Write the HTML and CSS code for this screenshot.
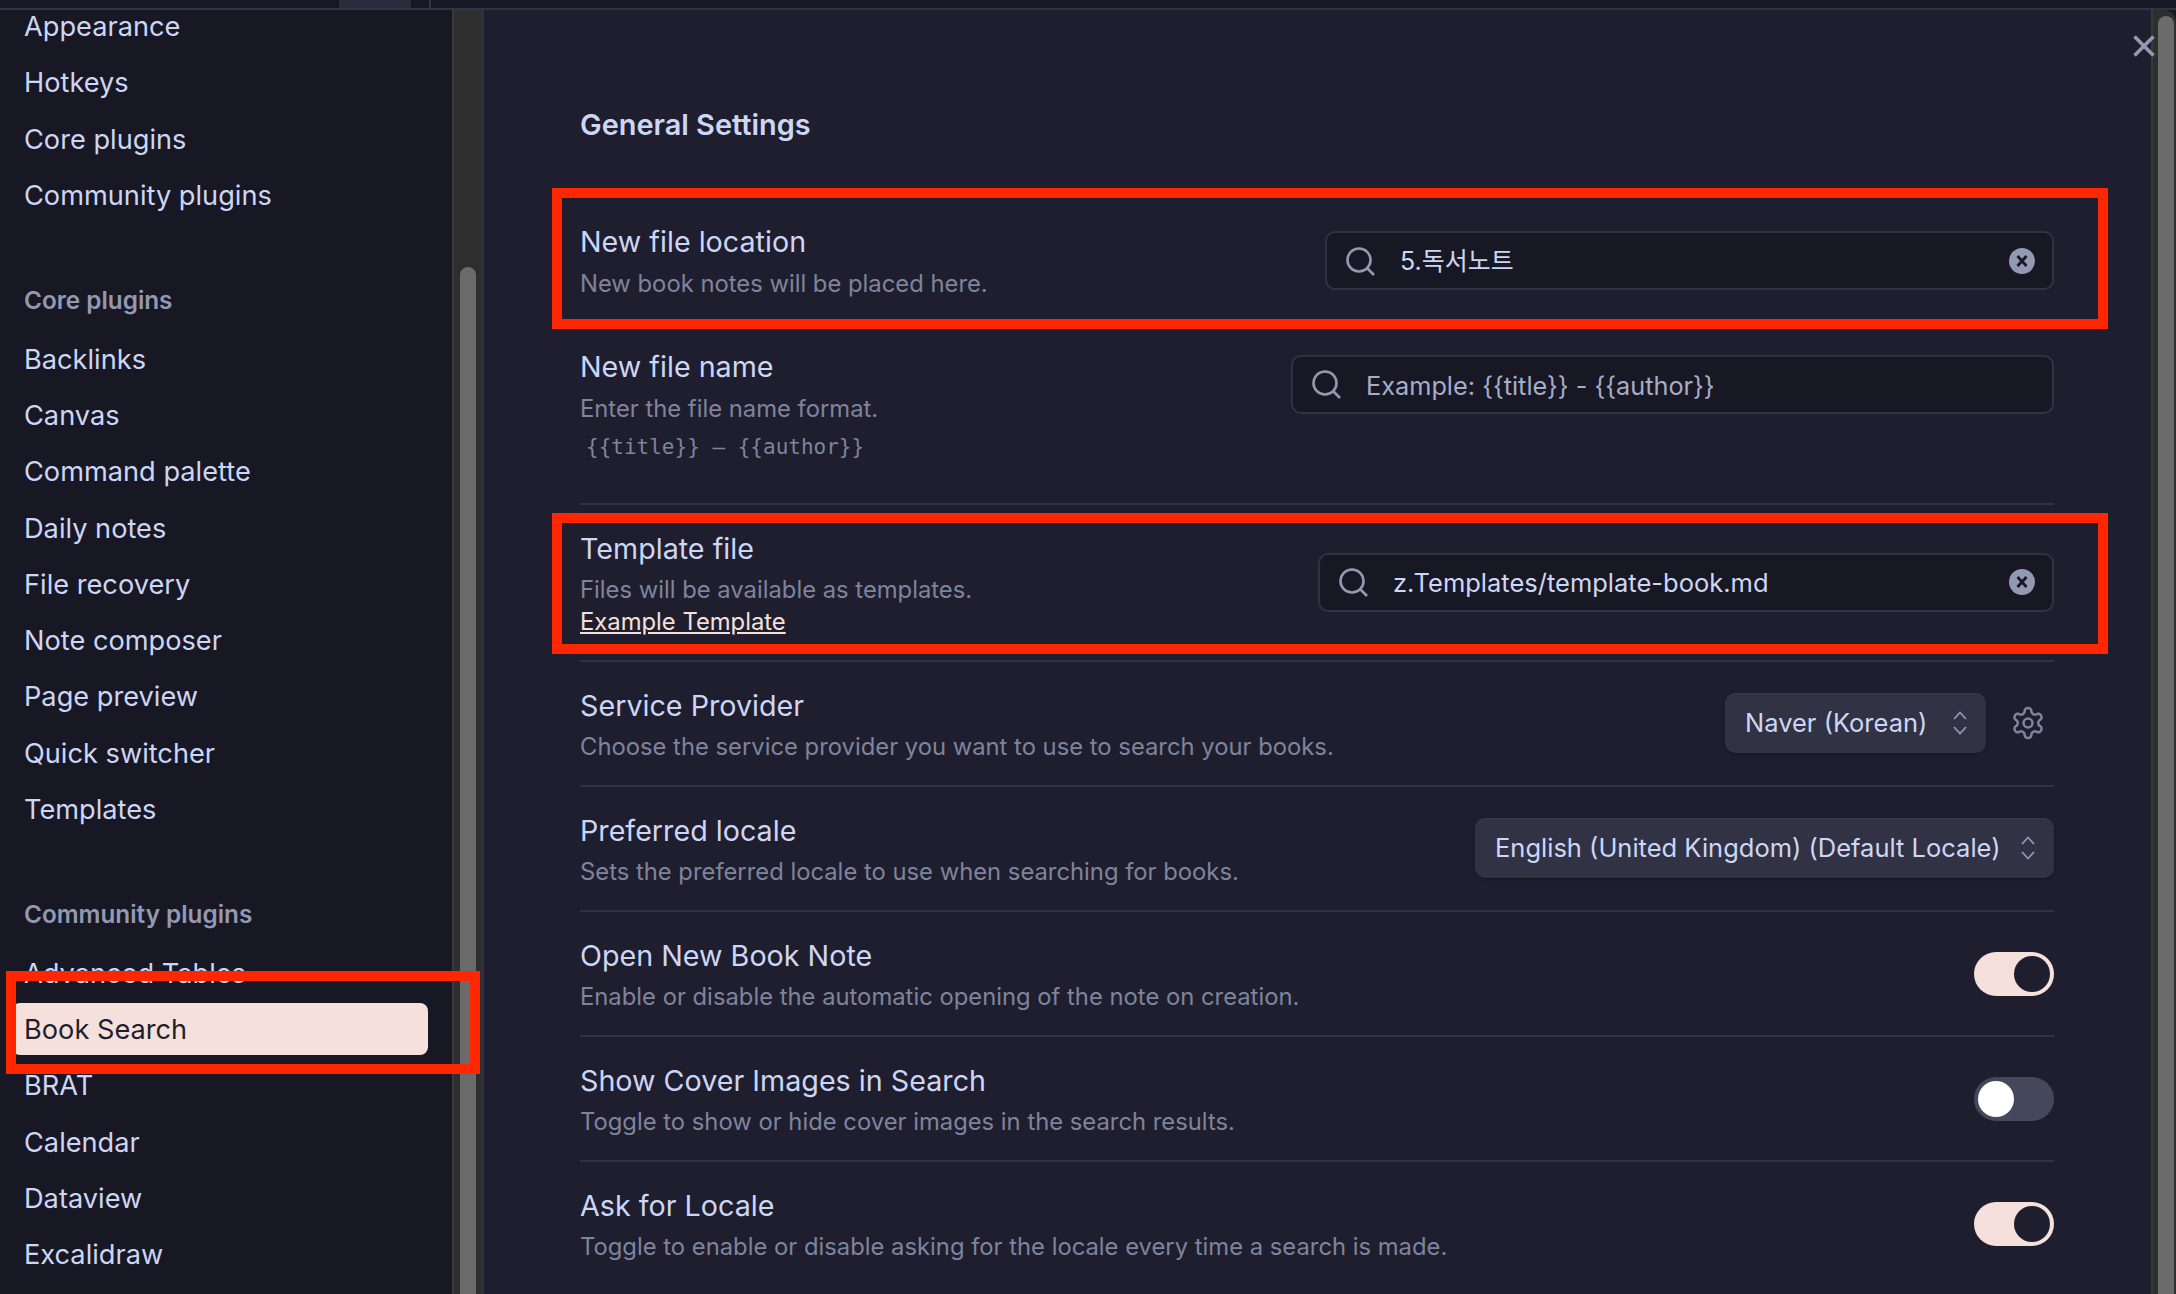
FILE: index.html
```html
<!DOCTYPE html>
<html lang="en">
<head>
    <meta charset="UTF-8">
    <title>Settings - Book Search</title>
    <link rel="stylesheet" href="styles.css">
</head>
<body>

<svg class="icon-defs" width="0" height="0">
    <symbol id="search" viewBox="0 0 30 30"><circle cx="14" cy="14" r="11.5"/><path d="M22.5 22.5 L29 29"/></symbol>
    <symbol id="clear" viewBox="0 0 26 26"><circle class="clear-disc" cx="13" cy="13" r="13"/><path class="clear-x" d="M8.5 8 L17.5 18 M17.5 8 L8.5 18"/></symbol>
    <symbol id="updown" viewBox="0 0 16 26"><path d="M2 9 L8 2.5 L14 9 M2 17 L8 23.5 L14 17"/></symbol>
</svg>

<!-- Tab strip -->
<div class="topbar">
    <div class="topbar-tab"></div>
    <div class="topbar-sep"></div>
</div>

<div class="modal">
    <!-- Sidebar -->
    <nav class="sidebar">
        <div class="nav-group nav-group-first">
            <div class="nav-item">Appearance</div>
            <div class="nav-item">Hotkeys</div>
            <div class="nav-item">Core plugins</div>
            <div class="nav-item">Community plugins</div>
        </div>
        <div class="nav-group">
            <div class="nav-title">Core plugins</div>
            <div class="nav-item">Backlinks</div>
            <div class="nav-item">Canvas</div>
            <div class="nav-item">Command palette</div>
            <div class="nav-item">Daily notes</div>
            <div class="nav-item">File recovery</div>
            <div class="nav-item">Note composer</div>
            <div class="nav-item">Page preview</div>
            <div class="nav-item">Quick switcher</div>
            <div class="nav-item">Templates</div>
        </div>
        <div class="nav-group">
            <div class="nav-title">Community plugins</div>
            <div class="nav-item">Advanced Tables</div>
            <div class="nav-item active">Book Search</div>
            <div class="nav-item">BRAT</div>
            <div class="nav-item">Calendar</div>
            <div class="nav-item">Dataview</div>
            <div class="nav-item">Excalidraw</div>
        </div>
    </nav>
    <div class="scrollbar scrollbar-nav"><div class="thumb thumb-nav"></div></div>

    <!-- Settings -->
    <main class="content">
        <h2 class="section-title">General Settings</h2>

        <div class="row row-first">
            <div class="info">
                <div class="name">New file location</div>
                <div class="desc">New book notes will be placed here.</div>
            </div>
            <div class="search-box box-location">
                <svg class="search-icon"><use href="#search"/></svg>
                <span class="search-value search-cjk">5.독서노트</span>
                <svg class="clear-icon"><use href="#clear"/></svg>
            </div>
        </div>

        <div class="row row-name">
            <div class="info">
                <div class="name">New file name</div>
                <div class="desc">Enter the file name format.</div>
                <code class="format">{{title}} – {{author}}</code>
            </div>
            <div class="search-box box-name">
                <svg class="search-icon"><use href="#search"/></svg>
                <span class="search-placeholder">Example: {{title}} - {{author}}</span>
            </div>
        </div>

        <div class="row row-template">
            <div class="info">
                <div class="name">Template file</div>
                <div class="desc">Files will be available as templates.</div>
                <a class="link" href="#">Example Template</a>
            </div>
            <div class="search-box box-template">
                <svg class="search-icon"><use href="#search"/></svg>
                <span class="search-value">z.Templates/template-book.md</span>
                <svg class="clear-icon"><use href="#clear"/></svg>
            </div>
        </div>

        <div class="row">
            <div class="info">
                <div class="name">Service Provider</div>
                <div class="desc">Choose the service provider you want to use to search your books.</div>
            </div>
            <div class="select select-provider">
                <span>Naver (Korean)</span>
                <svg class="updown"><use href="#updown"/></svg>
            </div>
            <svg class="gear" viewBox="0 0 24 24"><path d="M12.22 2h-.44a2 2 0 0 0-2 2v.18a2 2 0 0 1-1 1.73l-.43.25a2 2 0 0 1-2 0l-.15-.08a2 2 0 0 0-2.73.73l-.22.38a2 2 0 0 0 .73 2.73l.15.1a2 2 0 0 1 1 1.72v.51a2 2 0 0 1-1 1.74l-.15.09a2 2 0 0 0-.73 2.73l.22.38a2 2 0 0 0 2.73.73l.15-.08a2 2 0 0 1 2 0l.43.25a2 2 0 0 1 1 1.73V20a2 2 0 0 0 2 2h.44a2 2 0 0 0 2-2v-.18a2 2 0 0 1 1-1.73l.43-.25a2 2 0 0 1 2 0l.15.08a2 2 0 0 0 2.73-.73l.22-.39a2 2 0 0 0-.73-2.73l-.15-.08a2 2 0 0 1-1-1.74v-.5a2 2 0 0 1 1-1.74l.15-.09a2 2 0 0 0 .73-2.73l-.22-.38a2 2 0 0 0-2.73-.73l-.15.08a2 2 0 0 1-2 0l-.43-.25a2 2 0 0 1-1-1.73V4a2 2 0 0 0-2-2z"/><circle cx="12" cy="12" r="3"/></svg>
        </div>

        <div class="row">
            <div class="info">
                <div class="name">Preferred locale</div>
                <div class="desc">Sets the preferred locale to use when searching for books.</div>
            </div>
            <div class="select select-locale">
                <span>English (United Kingdom) (Default Locale)</span>
                <svg class="updown"><use href="#updown"/></svg>
            </div>
        </div>

        <div class="row">
            <div class="info">
                <div class="name">Open New Book Note</div>
                <div class="desc">Enable or disable the automatic opening of the note on creation.</div>
            </div>
            <div class="toggle on"><div class="knob"></div></div>
        </div>

        <div class="row">
            <div class="info">
                <div class="name">Show Cover Images in Search</div>
                <div class="desc">Toggle to show or hide cover images in the search results.</div>
            </div>
            <div class="toggle"><div class="knob"></div></div>
        </div>

        <div class="row">
            <div class="info">
                <div class="name">Ask for Locale</div>
                <div class="desc">Toggle to enable or disable asking for the locale every time a search is made.</div>
            </div>
            <div class="toggle on"><div class="knob"></div></div>
        </div>
    </main>
    <div class="scrollbar scrollbar-main"><div class="thumb thumb-main"></div></div>
</div>

<!-- Close button -->
<svg class="close" viewBox="0 0 22 22"><path d="M1.5 1.5 L20.5 20.5 M20.5 1.5 L1.5 20.5"/></svg>

<!-- Red annotation boxes -->
<div class="mark mark-nav"></div>
<div class="mark mark-location"></div>
<div class="mark mark-template"></div>

</body>
</html>
```

FILE: styles.css
```css
* {
    box-sizing: border-box;
}
html, body {
    margin: 0;
    height: 100%;
}
body {
    position: relative;
    overflow: hidden;
    background: #181825;
    font-family: Inter, "Noto Sans CJK KR", sans-serif;
    color: #cdd6f4;
}
.icon-defs {
    position: absolute;
}

/* top strip */
.topbar {
    display: flex;
    height: 10px;
    border-bottom: 2px solid #313244;
}
.topbar-tab {
    width: 72px;
    margin-left: 339px;
    background: #2a2b3c;
}
.topbar-sep {
    width: 2px;
    margin-left: 18px;
    background: #313244;
}

/* modal */
.modal {
    display: flex;
    height: 1284px;
    overflow: hidden;
    border-radius: 8px 12px 0 0;
    background: #1e1e2e;
}

/* sidebar */
.sidebar {
    flex: none;
    width: 452px;
    background: #181825;
    overflow: hidden;
}
.nav-group-first {
    margin-top: -10px;
}
.nav-group {
    padding-bottom: 60.5px;
}
.nav-title {
    padding-left: 24px;
    margin-bottom: 17px;
    height: 30px;
    line-height: 28px;
    font-size: 24.3px;
    font-weight: 600;
    color: #9399b2;
}
.nav-item {
    height: 52.3px;
    line-height: 53px;
    margin: 0 24px 4px 12px;
    padding-left: 12px;
    border-radius: 8px;
    font-size: 27.2px;
    white-space: nowrap;
}
.nav-item.active {
    background: #f5e0dc;
    color: #1e1e2e;
}

/* scrollbars */
.scrollbar {
    flex: none;
    background: #2e2e2e;
    border-left: 2px solid #3a3a3a;
}
.scrollbar-nav {
    width: 32px;
    padding-left: 6px;
    border-right: 3px solid #313244;
}
.thumb {
    height: 100%;
    background: #6b6b6b;
    border-radius: 8px 8px 0 0;
}
.thumb-nav {
    width: 16px;
    margin-top: 257px;
}
.scrollbar-main {
    width: 25px;
    padding-left: 5px;
}
.thumb-main {
    width: 16px;
    margin-top: 6px;
}

/* settings */
.content {
    flex: 1;
    min-width: 0;
    padding: 0 97px 0 96px;
}
.section-title {
    margin: 0;
    height: 188.5px;
    padding-top: 98px;
    line-height: 34px;
    font-size: 28.9px;
    font-weight: 600;
}
.row {
    display: flex;
    align-items: center;
    padding: 27.5px 0 23px;
    border-top: 2px solid #313244;
}
.row-first {
    border-top: none;
    padding: 27px 0 25px;
}
.row-first .name {
    margin-bottom: 11px;
}
.info {
    flex: 1;
    min-width: 0;
}
.name {
    height: 32px;
    line-height: 32px;
    margin-bottom: 10.5px;
    font-size: 28.7px;
}
.desc {
    height: 30px;
    line-height: 30px;
    font-size: 23.8px;
    color: #7f849c;
}
.format {
    display: block;
    height: 30px;
    line-height: 30px;
    margin-top: 8px;
    padding-left: 6px;
    font-family: "DejaVu Sans Mono", monospace;
    font-size: 21px;
    color: #7f849c;
}
.row-name {
    align-items: flex-start;
    border-top: none;
    padding: 27px 0 41px;
}
.row-name .name {
    margin-bottom: 11px;
}
.row-name .search-box {
    margin-top: 4px;
}
.row-template {
    padding-top: 28px;
}
.row-template .search-box {
    margin-top: -5px;
}
.link {
    display: block;
    height: 31px;
    line-height: 31px;
    margin-top: 1px;
    font-size: 23.8px;
    color: #f5e0dc;
}

/* search inputs */
.search-box {
    display: flex;
    flex: none;
    align-items: center;
    height: 59px;
    margin-top: -3px;
    padding: 0 18px;
    border: 2px solid #313244;
    border-radius: 10px;
    background: #181825;
    font-size: 25.5px;
}
.box-location {
    width: 729px;
}
.box-name {
    width: 763px;
}
.box-template {
    width: 736px;
}
.search-icon {
    flex: none;
    width: 30px;
    height: 30px;
    fill: none;
    stroke: #9399b2;
    stroke-width: 2.6;
}
.search-value,
.search-placeholder {
    flex: 1;
    margin-left: 25px;
    white-space: nowrap;
}
.search-cjk {
    padding-bottom: 4px;
    font-size: 25px;
}
.search-placeholder {
    padding-top: 2px;
    font-size: 25.3px;
    color: #a6adc8;
}
.clear-icon {
    flex: none;
    width: 26px;
    height: 26px;
    margin-right: -1px;
}
.clear-disc {
    fill: #9399b2;
}
.clear-x {
    fill: none;
    stroke: #181825;
    stroke-width: 2.8;
}

/* dropdowns */
.select {
    display: flex;
    flex: none;
    align-items: center;
    height: 60px;
    margin-top: -5px;
    padding: 0 18px 0 20px;
    border-radius: 10px;
    background: #313244;
    box-shadow: 0 1px 3px rgba(0, 0, 0, 0.3), inset 0 1px 0 rgba(255, 255, 255, 0.04);
    font-size: 25.5px;
    white-space: nowrap;
}
.select span {
    flex: 1;
    padding-bottom: 1px;
}
.select-provider {
    width: 261px;
}
.select-locale {
    width: 579px;
}
.updown {
    flex: none;
    width: 16px;
    height: 26px;
    fill: none;
    stroke: #9399b2;
    stroke-width: 1.8;
}
.gear {
    flex: none;
    width: 36px;
    height: 36px;
    margin: -5px 8px 0 24px;
    fill: none;
    stroke: #7f849c;
    stroke-width: 1.7;
}

/* toggles */
.toggle {
    display: flex;
    flex: none;
    width: 80px;
    height: 44px;
    margin-top: -3px;
    padding: 4px;
    border-radius: 22px;
    background: #45475a;
}
.knob {
    width: 36px;
    height: 36px;
    border-radius: 50%;
    background: #fff;
}
.toggle.on {
    justify-content: flex-end;
    background: #f5e0dc;
}
.toggle.on .knob {
    background: #1e1e2e;
}

/* close button */
.close {
    position: absolute;
    left: 2133px;
    top: 35px;
    width: 22px;
    height: 22px;
    fill: none;
    stroke: #9399b2;
    stroke-width: 3.6;
}

/* annotations */
.mark {
    position: absolute;
    border: 10px solid #ff2600;
}
.mark-nav {
    left: 6px;
    top: 971px;
    width: 474px;
    height: 103px;
}
.mark-location {
    left: 552px;
    top: 188px;
    width: 1556px;
    height: 141px;
}
.mark-template {
    left: 552px;
    top: 513px;
    width: 1556px;
    height: 141px;
}
```
